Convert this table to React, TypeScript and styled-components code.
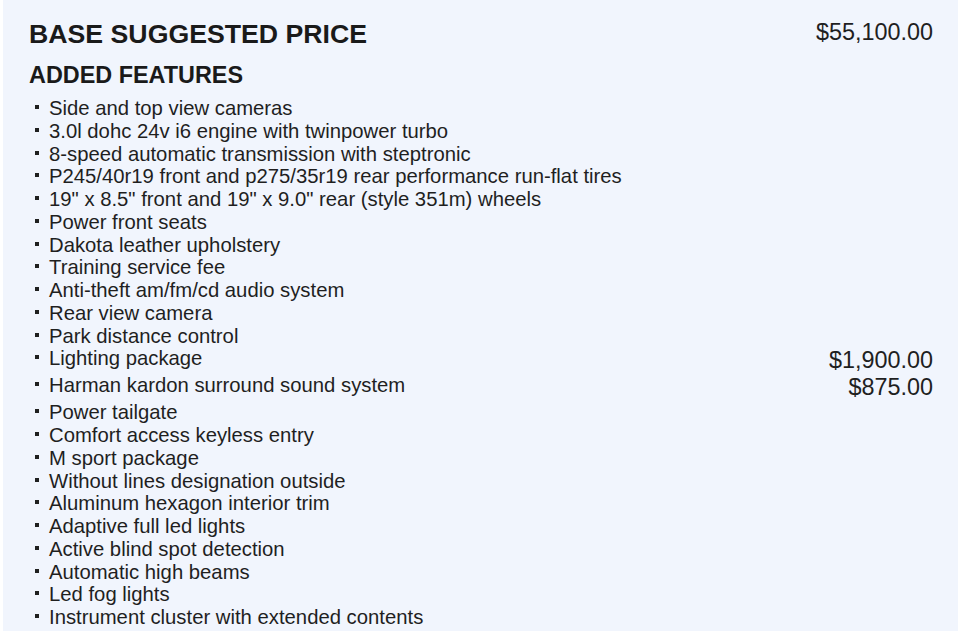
import React from 'react';
import styled, { createGlobalStyle } from 'styled-components';

const GlobalStyle = createGlobalStyle`
  html, body {
    margin: 0;
    padding: 0;
    background: #ffffff;
  }
  body {
    font-family: "Liberation Sans", Arial, sans-serif;
    color: #1f1f1f;
  }
`;

const Panel = styled.div`
  margin: 0 3px;
  min-height: 631px;
  box-sizing: border-box;
  padding: 19px 25px 0 26px;
  background: #f1f5fd;
`;

const HeaderRow = styled.div`
  display: flex;
  justify-content: space-between;
  align-items: flex-start;
`;

const Title = styled.h1`
  margin: 0;
  font-size: 26.7px;
  line-height: 31px;
  font-weight: 700;
  color: #1a1a1a;
`;

const Amount = styled.span`
  font-size: 23.4px;
  line-height: 27px;
  color: #1f1f1f;
  white-space: nowrap;
`;

const SubTitle = styled.h2`
  margin: 12px 0 8px;
  font-size: 23.4px;
  line-height: 27px;
  font-weight: 700;
  color: #1a1a1a;
`;

const FeatureList = styled.ul`
  list-style: none;
  margin: 0;
  padding: 0 0 0 6px;
`;

const FeatureRow = styled.li`
  display: flex;
  justify-content: space-between;
  align-items: flex-start;
`;

const FeatureName = styled.div`
  display: flex;
  align-items: flex-start;
  gap: 10px;
  font-size: 20.3px;
  line-height: 22.75px;
  color: #1f1f1f;
`;

const Bullet = styled.span`
  display: block;
  flex-shrink: 0;
  width: 4px;
  height: 4px;
  margin-top: 8px;
  background: #1f1f1f;
`;

interface Feature {
  name: string;
  price?: string;
}

const features: Feature[] = [
  { name: 'Side and top view cameras' },
  { name: '3.0l dohc 24v i6 engine with twinpower turbo' },
  { name: '8-speed automatic transmission with steptronic' },
  { name: 'P245/40r19 front and p275/35r19 rear performance run-flat tires' },
  { name: '19" x 8.5" front and 19" x 9.0" rear (style 351m) wheels' },
  { name: 'Power front seats' },
  { name: 'Dakota leather upholstery' },
  { name: 'Training service fee' },
  { name: 'Anti-theft am/fm/cd audio system' },
  { name: 'Rear view camera' },
  { name: 'Park distance control' },
  { name: 'Lighting package', price: '$1,900.00' },
  { name: 'Harman kardon surround sound system', price: '$875.00' },
  { name: 'Power tailgate' },
  { name: 'Comfort access keyless entry' },
  { name: 'M sport package' },
  { name: 'Without lines designation outside' },
  { name: 'Aluminum hexagon interior trim' },
  { name: 'Adaptive full led lights' },
  { name: 'Active blind spot detection' },
  { name: 'Automatic high beams' },
  { name: 'Led fog lights' },
  { name: 'Instrument cluster with extended contents' },
];

const App: React.FC = () => {
  return (
    <>
      <GlobalStyle />
      <Panel>
        <HeaderRow>
          <Title>BASE SUGGESTED PRICE</Title>
          <Amount>$55,100.00</Amount>
        </HeaderRow>
        <SubTitle>ADDED FEATURES</SubTitle>
        <FeatureList>
          {features.map(feature => (
            <FeatureRow key={feature.name}>
              <FeatureName>
                <Bullet />
                {feature.name}
              </FeatureName>
              {feature.price && <Amount>{feature.price}</Amount>}
            </FeatureRow>
          ))}
        </FeatureList>
      </Panel>
    </>
  );
};

export default App;
